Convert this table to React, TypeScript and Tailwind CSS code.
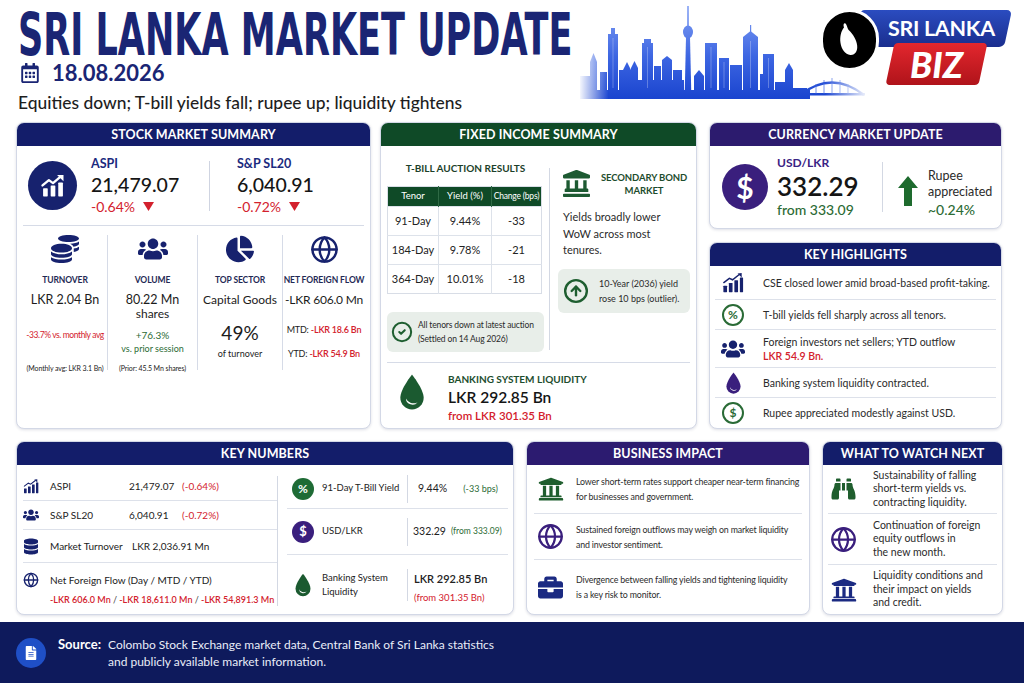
import type { ReactNode } from 'react';
import { Globe, CircleCheck, CircleArrowUp } from 'lucide-react';
import {
  FaBinoculars,
  FaBriefcase,
  FaRegCalendarAlt,
  FaChartPie,
  FaCoins,
  FaDatabase,
  FaFileAlt,
  FaLandmark,
  FaUniversity,
  FaUsers,
} from 'react-icons/fa';

// Small hand-drawn glyphs that the icon packs don't carry in this shape.
function ChartUp({ className = '' }: { className?: string }) {
  return (
    <svg viewBox="0 0 24 24" className={className} fill="currentColor" aria-hidden>
      <rect x="3.5" y="14" width="4" height="7" rx="0.6" />
      <rect x="10" y="11.5" width="4" height="9.5" rx="0.6" />
      <rect x="16.5" y="9" width="4" height="12" rx="0.6" />
      <path d="M3 11.5 8.5 7l3.5 2.5 6.5-5.5" fill="none" stroke="currentColor" strokeWidth="2" strokeLinecap="round" strokeLinejoin="round" />
      <path d="M21 2.5V8l-5.5-5.5z" />
    </svg>
  );
}

function BarsUp({ className = '' }: { className?: string }) {
  return (
    <svg viewBox="0 0 24 24" className={className} fill="currentColor" aria-hidden>
      <rect x="1.5" y="15" width="4" height="7" rx="0.5" />
      <rect x="7.5" y="12" width="4" height="10" rx="0.5" />
      <rect x="13.5" y="9" width="4" height="13" rx="0.5" />
      <rect x="19.5" y="6" width="3.5" height="16" rx="0.5" />
      <path d="M2 11.5 8 7l3.5 1.5L18.5 3" fill="none" stroke="currentColor" strokeWidth="1.6" strokeLinecap="round" />
      <path d="M21.5 1v5l-4.5-4.5z" />
    </svg>
  );
}

function Drop({ className = '' }: { className?: string }) {
  return (
    <svg viewBox="0 0 24 32" className={className} aria-hidden>
      <path d="M12 1C12 1 2 13.5 2 21a10 10 0 0 0 20 0C22 13.5 12 1 12 1Z" fill="currentColor" />
      <path d="M6.8 21.5a5.6 5.6 0 0 0 10 3.2 7 7 0 0 1-10-3.2Z" fill="#fff" />
    </svg>
  );
}

function UpArrow({ className = '' }: { className?: string }) {
  return (
    <svg viewBox="0 0 20 30" className={className} fill="currentColor" aria-hidden>
      <path d="M10 0 20 12h-6v18H6V12H0z" />
    </svg>
  );
}

function Tri() {
  return (
    <svg viewBox="0 0 10 8" className="h-[9px] w-[11px]" fill="#d3212d" aria-hidden>
      <path d="M0 0h10L5 8z" />
    </svg>
  );
}

function Skyline() {
  return (
    <svg width="285" height="95" viewBox="0 0 285 95" className="mt-[4px] shrink-0" aria-hidden>
      <defs>
        <linearGradient id="skyFill" gradientUnits="userSpaceOnUse" x1="0" y1="0" x2="0" y2="95">
          <stop offset="0" stopColor="#86a3f5" />
          <stop offset="0.55" stopColor="#3d66e2" />
          <stop offset="1" stopColor="#1a44cf" />
        </linearGradient>
        <linearGradient id="skyFade" x1="0" y1="0" x2="1" y2="0">
          <stop offset="0" stopColor="#fff" stopOpacity="0.95" />
          <stop offset="0.1" stopColor="#fff" stopOpacity="0" />
          <stop offset="0.86" stopColor="#fff" stopOpacity="0" />
          <stop offset="1" stopColor="#fff" stopOpacity="0.9" />
        </linearGradient>
      </defs>
      <g fill="url(#skyFill)">
        <rect x="0" y="72" width="10" height="22" />
        <path d="M10 94V58l3.5-9 3.5 9v36z" />
        <rect x="20" y="68" width="7" height="26" />
        <rect x="28" y="30" width="10" height="64" />
        <rect x="31" y="24" width="4" height="7" />
        <rect x="39" y="66" width="5" height="28" />
        <path d="M43 94V66l4-8 4 8v28z" />
        <path d="M51 94V64l3.5-7 3.5 7v30z" />
        <rect x="58" y="76" width="46" height="18" />
        <rect x="62" y="39" width="11" height="55" />
        <rect x="64" y="35" width="7" height="5" />
        <rect x="74" y="62" width="7" height="32" />
        <rect x="82" y="56" width="10" height="38" />
        <path d="M82 56l5-4 5 4z" />
        <rect x="93" y="66" width="9" height="28" />
        <rect x="107.2" y="2" width="1.6" height="20" />
        <ellipse cx="108" cy="28" rx="5" ry="6.5" />
        <path d="M106 33h4l1.4 61h-6.8z" />
        <path d="M114 94V72l5-6 5 6v22z" />
        <rect x="125" y="39" width="12" height="55" />
        <rect x="139" y="54" width="10" height="40" />
        <rect x="150" y="61" width="12" height="33" />
        <rect x="163" y="33" width="15" height="61" />
        <path d="M163 33l7.5-6 7.5 6z" />
        <rect x="170" y="21" width="1.2" height="7" />
        <rect x="180" y="70" width="3" height="24" />
        <rect x="183" y="50" width="11" height="44" />
        <rect x="195" y="78" width="10" height="16" />
        <rect x="205" y="66" width="8" height="28" />
        <path d="M205 66l4-7 4 7z" />
        <rect x="213" y="84" width="14" height="10" />
        <rect x="0" y="86" width="230" height="9" />
        <rect x="215" y="89" width="70" height="2.5" />
      </g>
      <path d="M220 91 Q252 66 284 91" fill="none" stroke="url(#skyFill)" strokeWidth="2.4" />
      <g stroke="#3d66e2" strokeWidth="0.7">
        <line x1="236" y1="80" x2="236" y2="90" />
        <line x1="244" y1="76" x2="244" y2="90" />
        <line x1="252" y1="74" x2="252" y2="90" />
        <line x1="260" y1="76" x2="260" y2="90" />
        <line x1="268" y1="80" x2="268" y2="90" />
      </g>
      <g stroke="#fff" strokeOpacity="0.35" strokeWidth="0.8">
        <line x1="33" y1="34" x2="33" y2="84" />
        <line x1="67.5" y1="43" x2="67.5" y2="84" />
        <line x1="131" y1="43" x2="131" y2="84" />
        <line x1="170.5" y1="37" x2="170.5" y2="84" />
        <line x1="188.5" y1="54" x2="188.5" y2="84" />
        <line x1="144" y1="58" x2="144" y2="84" />
      </g>
      <rect width="285" height="95" fill="url(#skyFade)" />
    </svg>
  );
}

function Logo() {
  return (
    <div className="relative ml-[-45px] mt-[8px] h-[80px] w-[192px] shrink-0">
      <div className="absolute left-[36px] top-[2px] flex h-[37px] w-[152px] -skew-x-12 items-center justify-end rounded-[5px] bg-linear-to-b from-[#2b4cc0] to-[#1a2e8e] pr-[13px]">
        <span className="skew-x-12 text-[21.5px] font-bold leading-none tracking-[-0.3px] text-white">SRI LANKA</span>
      </div>
      <div className="absolute left-[70px] top-[35px] flex h-[42px] w-[93px] -skew-x-12 items-center justify-center rounded-[4px] bg-linear-to-b from-[#e3272e] to-[#b0131a]">
        <span className="skew-x-12 text-[36px] font-black italic leading-none text-white">BIZ</span>
      </div>
      <div className="absolute left-0 top-[1px] h-[62px] w-[59px] overflow-hidden rounded-full border-[3px] border-white bg-black">
        <svg viewBox="0 0 54 56" className="h-full w-full" aria-hidden>
          <path
            d="M22 11c-1.2.4-1.4 2.4-.6 4.2-2.8 3.4-4.4 9-3.6 15.6.8 6.6 4.8 12 10 12.4 5 .4 7.6-4 7-9.6-.6-6-4.2-11.6-8.4-15.6-1.8-1.8-2.4-7.6-4.4-7Z"
            fill="#fff"
          />
        </svg>
      </div>
    </div>
  );
}

function Panel({ title, bar, className = '', children }: { title: string; bar: string; className?: string; children: ReactNode }) {
  return (
    <section className={`flex flex-col overflow-hidden rounded-[8px] border border-[#d3d8e6] bg-white shadow-[0_1px_3px_rgba(20,30,80,0.14)] ${className}`}>
      <h2 className={`h-[23px] shrink-0 text-center text-[12.5px] font-bold leading-[23px] tracking-[0.1px] text-white ${bar}`}>{title}</h2>
      {children}
    </section>
  );
}

function IndexFigure({ name, value, change, className = '' }: { name: string; value: string; change: string; className?: string }) {
  return (
    <div className={className}>
      <p className="text-[12.5px] font-bold leading-[16px] text-[#1b2a7e]">{name}</p>
      <p className="text-[19.5px] font-medium leading-[26px] text-[#151515]">{value}</p>
      <p className="flex items-center gap-[8px] text-[14px] leading-[18px] text-[#d3212d]">
        {change}
        <Tri />
      </p>
    </div>
  );
}

function StatCol({ icon, label, first = false, children }: { icon: ReactNode; label: string; first?: boolean; children: ReactNode }) {
  return (
    <div className={`mt-[9px] flex h-[135px] flex-col items-center whitespace-nowrap ${first ? '' : 'border-l border-[#d6dbe7]'}`}>
      <div className="flex h-[28px] items-center text-[#17226e]">{icon}</div>
      <p className="mt-[11px] text-[8.5px] font-bold leading-[12px] tracking-[-0.1px] text-[#1f2a55]">{label}</p>
      {children}
    </div>
  );
}

function StockSummary() {
  return (
    <Panel title="STOCK MARKET SUMMARY" bar="bg-[#131d6a]" className="h-[307px] w-[355px]">
      <div className="flex h-[79px] shrink-0 items-center pl-[11px]">
        <div className="grid h-[49px] w-[49px] place-items-center rounded-full bg-[#17226e]">
          <ChartUp className="h-[28px] w-[28px] text-white" />
        </div>
        <IndexFigure className="ml-[14px] w-[118px]" name="ASPI" value="21,479.07" change="-0.64%" />
        <div className="h-[50px] w-px bg-[#cfd4e1]" />
        <IndexFigure className="ml-[27px]" name="S&P SL20" value="6,040.91" change="-0.72%" />
      </div>
      <div className="mx-[6px] h-px shrink-0 bg-[#d6dbe7]" />
      <div className="grid grid-cols-[84px_90px_85px_83px] px-[6px] text-center text-[#1c1c1c]">
        <StatCol first icon={<FaCoins className="h-[28px] w-[28px]" />} label="TURNOVER">
          <p className="mt-[6px] text-[12.5px] leading-[16px]">LKR 2.04 Bn</p>
          <p className="mt-[21px] text-[8.5px] leading-[12px] tracking-[-0.4px] text-[#d3212d]">-33.7% vs. monthly avg</p>
          <p className="mt-[22px] text-[7px] leading-[10px] tracking-[-0.1px]">(Monthly avg: LKR 3.1 Bn)</p>
        </StatCol>
        <StatCol icon={<FaUsers className="h-[28px] w-[30px]" />} label="VOLUME">
          <p className="mt-[6px] text-[12.5px] leading-[16px]">80.22 Mn</p>
          <p className="text-[12px] leading-[12px]">shares</p>
          <p className="mt-[9px] text-[10px] leading-[12px] text-[#2c6b35]">+76.3%</p>
          <p className="mt-[1px] text-[9px] leading-[14px] text-[#2c6b35]">vs. prior session</p>
          <p className="mt-[7px] text-[7px] leading-[10px] tracking-[-0.1px]">(Prior: 45.5 Mn shares)</p>
        </StatCol>
        <StatCol icon={<FaChartPie className="h-[28px] w-[28px]" />} label="TOP SECTOR">
          <p className="mt-[6px] text-[12px] leading-[16px]">Capital Goods</p>
          <p className="mt-[13px] text-[19px] leading-[24px]">49%</p>
          <p className="mt-[3px] text-[9px] leading-[12px]">of turnover</p>
        </StatCol>
        <StatCol icon={<Globe className="h-[29px] w-[29px]" strokeWidth={2} />} label="NET FOREIGN FLOW">
          <p className="mt-[6px] text-[12px] leading-[16px] tracking-[-0.2px]">-LKR 606.0 Mn</p>
          <p className="mt-[15px] text-[9px] leading-[14px] tracking-[-0.2px]">
            MTD: <span className="font-semibold text-[#d3212d]">-LKR 18.6 Bn</span>
          </p>
          <p className="mt-[10px] text-[9px] leading-[14px] tracking-[-0.2px]">
            YTD: <span className="font-semibold text-[#d3212d]">-LKR 54.9 Bn</span>
          </p>
        </StatCol>
      </div>
    </Panel>
  );
}

const tbills = [
  ['91-Day', '9.44%', '-33'],
  ['184-Day', '9.78%', '-21'],
  ['364-Day', '10.01%', '-18'],
];

function FixedIncome() {
  return (
    <Panel title="FIXED INCOME SUMMARY" bar="bg-[#0f4a27]" className="ml-[9px] h-[307px] w-[317px]">
      <div className="flex h-[216px] shrink-0 pl-[6px]">
        <div className="w-[157px] pt-[14px]">
          <p className="text-center text-[10px] font-bold leading-[16px] text-[#1c3f2a]">T-BILL AUCTION RESULTS</p>
          <table className="mt-[10px] w-[155px] border-collapse border border-[#d8dde6] text-center">
            <thead>
              <tr className="h-[20px] bg-[#0f4a27] text-white">
                <th className="w-[51px] border-r border-[#2f6a45] text-[9.5px] font-normal">Tenor</th>
                <th className="w-[53px] border-r border-[#2f6a45] text-[9.5px] font-normal">Yield (%)</th>
                <th className="text-[8.5px] font-normal tracking-[-0.2px]">Change (bps)</th>
              </tr>
            </thead>
            <tbody className="text-[11px] text-[#222]">
              {tbills.map(([tenor, yieldPct, change]) => (
                <tr key={tenor} className="h-[29px] border-t border-[#dde2ea]">
                  <td className="border-r border-[#dde2ea]">{tenor}</td>
                  <td className="border-r border-[#dde2ea]">{yieldPct}</td>
                  <td>{change}</td>
                </tr>
              ))}
            </tbody>
          </table>
          <div className="mt-[18px] flex h-[40px] items-center rounded-[6px] bg-[#e8eee9] pl-[4px]">
            <CircleCheck className="h-[22px] w-[22px] shrink-0 text-[#1e5e30]" strokeWidth={2.2} />
            <p className="ml-[5px] whitespace-nowrap text-[8.5px] leading-[14px] tracking-[-0.15px] text-[#2a2a2a]">
              All tenors down at latest auction
              <br />
              (Settled on 14 Aug 2026)
            </p>
          </div>
        </div>
        <div className="ml-[5px] mt-[22px] h-[182px] w-px bg-[#d3d8e3]" />
        <div className="w-[140px] pl-[8px]">
          <div className="mt-[24px] flex items-center pl-[5px]">
            <FaLandmark className="h-[27px] w-[27px] shrink-0 text-[#1d5a32]" />
            <p className="ml-[8px] w-[92px] whitespace-nowrap text-center text-[9.5px] font-bold leading-[13px] tracking-[-0.1px] text-[#1d4d2e]">
              SECONDARY BOND
              <br />
              MARKET
            </p>
          </div>
          <p className="mt-[12px] pl-[5px] text-[11px] leading-[16.5px] text-[#2b2b2b]">
            Yields broadly lower
            <br />
            WoW across most
            <br />
            tenures.
          </p>
          <div className="mt-[10px] flex h-[44px] w-[132px] items-center rounded-[6px] bg-[#e8eee9] pl-[5px]">
            <CircleArrowUp className="h-[26px] w-[26px] shrink-0 text-[#1e5e30]" strokeWidth={2.2} />
            <p className="ml-[10px] whitespace-nowrap text-[9px] leading-[15px] text-[#2a2a2a]">
              10-Year (2036) yield
              <br />
              rose 10 bps (outlier).
            </p>
          </div>
        </div>
      </div>
      <div className="mx-[6px] h-px shrink-0 bg-[#d6dbe7]" />
      <div className="flex pl-[17px] pt-[9px]">
        <Drop className="mt-[1px] h-[38px] w-[28px] text-[#1b5a30]" />
        <div className="ml-[22px]">
          <p className="text-[10px] font-bold leading-[14px] text-[#1d4d2e]">BANKING SYSTEM LIQUIDITY</p>
          <p className="text-[15.5px] font-semibold leading-[22px] text-[#151515]">LKR 292.85 Bn</p>
          <p className="text-[11.5px] font-semibold leading-[16px] text-[#d3212d]">from LKR 301.35 Bn</p>
        </div>
      </div>
    </Panel>
  );
}

function RingGlyph({ glyph }: { glyph: string }) {
  return (
    <div className="grid h-[22px] w-[22px] place-items-center rounded-full border-[2px] border-[#2a6b36] text-[12px] font-bold leading-none text-[#2a6b36]">
      {glyph}
    </div>
  );
}

const highlights: { h: string; icon: ReactNode; text: ReactNode }[] = [
  { h: 'h-[33px]', icon: <BarsUp className="h-[22px] w-[22px] text-[#17226e]" />, text: 'CSE closed lower amid broad-based profit-taking.' },
  { h: 'h-[29px]', icon: <RingGlyph glyph="%" />, text: 'T-bill yields fell sharply across all tenors.' },
  {
    h: 'h-[37px]',
    icon: <FaUsers className="h-[22px] w-[24px] text-[#17226e]" />,
    text: (
      <>
        Foreign investors net sellers; YTD outflow
        <br />
        <span className="font-semibold text-[#d3212d]">LKR 54.9 Bn.</span>
      </>
    ),
  },
  { h: 'h-[29px]', icon: <Drop className="h-[24px] w-[17px] text-[#3a1f7d]" />, text: 'Banking system liquidity contracted.' },
  { h: 'h-[30px]', icon: <RingGlyph glyph="$" />, text: 'Rupee appreciated modestly against USD.' },
];

function CurrencyColumn() {
  return (
    <div className="ml-[12px] flex w-[293px] flex-col">
      <Panel title="CURRENCY MARKET UPDATE" bar="bg-[#2c1b6e]" className="h-[107px]">
        <div className="flex flex-1 items-center pl-[12px]">
          <div className="grid h-[46px] w-[46px] shrink-0 place-items-center rounded-full bg-[#3a1f7d] text-[30px] font-bold leading-none text-white">
            $
          </div>
          <div className="ml-[9px] w-[105px]">
            <p className="text-[12px] font-bold leading-[16px] text-[#3a2384]">USD/LKR</p>
            <p className="text-[26px] font-semibold leading-[30px] text-[#151515]">332.29</p>
            <p className="text-[14px] font-medium leading-[18px] text-[#2c6b35]">from 333.09</p>
          </div>
          <div className="h-[50px] w-px bg-[#d3d8e3]" />
          <UpArrow className="ml-[15px] mt-[8px] h-[30px] w-[20px] text-[#1e6b2e]" />
          <div className="ml-[10px] mt-[14px] text-[12.5px] leading-[16px] text-[#2b2b2b]">
            <p>Rupee</p>
            <p>appreciated</p>
            <p className="text-[14px] font-medium leading-[20px] text-[#2c6b35]">~0.24%</p>
          </div>
        </div>
      </Panel>
      <Panel title="KEY HIGHLIGHTS" bar="bg-[#131d6a]" className="mt-[13px] h-[187px]">
        {highlights.map((row, i) => (
          <div key={i}>
            {i > 0 && <div className="mx-[5px] h-px bg-[#dde1ea]" />}
            <div className={`flex items-center pl-[11px] ${row.h}`}>
              <div className="flex w-[24px] shrink-0 justify-center">{row.icon}</div>
              <p className="ml-[18px] text-[10.5px] leading-[14px] text-[#2b2b2b]">{row.text}</p>
            </div>
          </div>
        ))}
      </Panel>
    </div>
  );
}

function KeyNumbers() {
  const rule = <div className="h-px bg-[#dde1ea]" />;
  return (
    <Panel title="KEY NUMBERS" bar="bg-[#131d6a]" className="w-[498px]">
      <div className="flex flex-1 whitespace-nowrap text-[10px] text-[#222]">
        <div className="w-[260px] pl-[6px]">
          <div className="w-[254px]">
            <div className="flex h-[35px] items-center pt-[8px]">
              <div className="flex w-[16px] justify-center">
                <BarsUp className="h-[17px] w-[17px] text-[#17226e]" />
              </div>
              <span className="ml-[11px] w-[79px]">ASPI</span>
              <span className="w-[53px]">21,479.07</span>
              <span className="text-[#d3212d]">(-0.64%)</span>
            </div>
            {rule}
            <div className="flex h-[28px] items-center">
              <div className="flex w-[16px] justify-center">
                <FaUsers className="h-[16px] w-[18px] text-[#17226e]" />
              </div>
              <span className="ml-[11px] w-[79px]">S&amp;P SL20</span>
              <span className="w-[53px]">6,040.91</span>
              <span className="text-[#d3212d]">(-0.72%)</span>
            </div>
            {rule}
            <div className="flex h-[32px] items-center">
              <div className="flex w-[16px] justify-center">
                <FaDatabase className="h-[17px] w-[14px] text-[#17226e]" />
              </div>
              <span className="ml-[11px] w-[82px]">Market Turnover</span>
              <span>LKR 2,036.91 Mn</span>
            </div>
            {rule}
            <div className="pt-[8px]">
              <div className="flex items-center">
                <div className="flex w-[16px] justify-center">
                  <Globe className="h-[18px] w-[18px] text-[#17226e]" strokeWidth={2} />
                </div>
                <span className="ml-[11px] leading-[16px]">Net Foreign Flow (Day / MTD / YTD)</span>
              </div>
              <p className="ml-[27px] mt-[2px] text-[9px] font-semibold leading-[18px] text-[#d3212d]">
                -LKR 606.0 Mn <span className="font-normal text-[#444]">/</span> -LKR 18,611.0 Mn{' '}
                <span className="font-normal text-[#444]">/</span> -LKR 54,891.3 Mn
              </p>
            </div>
          </div>
        </div>
        <div className="mt-[11px] h-[130px] w-px bg-[#d3d8e3]" />
        <div className="flex-1 pl-[9px] pr-[5px]">
          <div className="flex h-[43px] items-center pt-[4px]">
            <div className="ml-[5px] grid h-[22px] w-[22px] shrink-0 place-items-center rounded-full bg-[#1e6b35] text-[12px] font-bold text-white">%</div>
            <span className="ml-[8px] w-[85px] text-[9.5px]">91-Day T-Bill Yield</span>
            <div className="h-[28px] w-px bg-[#d3d8e3]" />
            <span className="ml-[10px] text-[10.5px]">9.44%</span>
            <span className="ml-[16px] text-[9px] text-[#2c6b35]">(-33 bps)</span>
          </div>
          {rule}
          <div className="flex h-[45px] items-center">
            <div className="ml-[5px] grid h-[22px] w-[22px] shrink-0 place-items-center rounded-full bg-[#3a1f7d] text-[13px] font-bold text-white">$</div>
            <span className="ml-[8px] w-[85px] text-[9.5px]">USD/LKR</span>
            <div className="h-[28px] w-px bg-[#d3d8e3]" />
            <span className="ml-[5px] text-[10.5px]">332.29</span>
            <span className="ml-[5px] text-[8.5px] text-[#2c6b35]">(from 333.09)</span>
          </div>
          {rule}
          <div className="flex h-[60px] items-center">
            <Drop className="ml-[7px] h-[24px] w-[18px] shrink-0 text-[#1b5a30]" />
            <span className="ml-[10px] w-[85px] text-[9.5px] leading-[14px]">
              Banking System
              <br />
              Liquidity
            </span>
            <div className="h-[32px] w-px bg-[#d3d8e3]" />
            <div className="ml-[6px] mt-[6px]">
              <p className="text-[11px] font-semibold leading-[18px]">LKR 292.85 Bn</p>
              <p className="mt-[2px] text-[9.5px] leading-[16px] text-[#d3212d]">(from 301.35 Bn)</p>
            </div>
          </div>
        </div>
      </div>
    </Panel>
  );
}

const impacts: { h: string; icon: ReactNode; text: ReactNode }[] = [
  {
    h: 'h-[48px]',
    icon: <FaUniversity className="h-[26px] w-[26px] text-[#1f5e2e]" />,
    text: (
      <>
        Lower short-term rates support cheaper near-term financing
        <br />
        for businesses and government.
      </>
    ),
  },
  {
    h: 'h-[45px]',
    icon: <Globe className="h-[27px] w-[27px] text-[#3a1f7d]" strokeWidth={2} />,
    text: (
      <>
        Sustained foreign outflows may weigh on market liquidity
        <br />
        and investor sentiment.
      </>
    ),
  },
  {
    h: 'h-[54px]',
    icon: <FaBriefcase className="h-[25px] w-[25px] text-[#1b2a82]" />,
    text: (
      <>
        Divergence between falling yields and tightening liquidity
        <br />
        is a key risk to monitor.
      </>
    ),
  },
];

const watch: { h: string; icon: ReactNode; lines: string[] }[] = [
  { h: 'h-[48px]', icon: <FaBinoculars className="h-[24px] w-[27px] text-[#1f5e2e]" />, lines: ['Sustainability of falling', 'short-term yields vs.', 'contracting liquidity.'] },
  { h: 'h-[50px]', icon: <Globe className="h-[27px] w-[27px] text-[#3a1f7d]" strokeWidth={2} />, lines: ['Continuation of foreign', 'equity outflows in', 'the new month.'] },
  { h: 'h-[49px]', icon: <FaUniversity className="h-[26px] w-[26px] text-[#1b2a82]" />, lines: ['Liquidity conditions and', 'their impact on yields', 'and credit.'] },
];

function BusinessImpact() {
  return (
    <Panel title="BUSINESS IMPACT" bar="bg-[#2c1b70]" className="ml-[12px] w-[284px]">
      {impacts.map((row, i) => (
        <div key={i}>
          {i > 0 && <div className="mx-[7px] h-px bg-[#dde1ea]" />}
          <div className={`flex items-center pl-[10px] ${row.h}`}>
            <div className="flex w-[27px] shrink-0 justify-center">{row.icon}</div>
            <p className="ml-[12px] whitespace-nowrap text-[8.8px] leading-[15px] tracking-[-0.15px] text-[#2b2b2b]">{row.text}</p>
          </div>
        </div>
      ))}
    </Panel>
  );
}

function WatchNext() {
  return (
    <Panel title="WHAT TO WATCH NEXT" bar="bg-[#131d6a]" className="ml-[12px] w-[181px]">
      {watch.map((row, i) => (
        <div key={i}>
          {i > 0 && <div className="mx-[5px] h-px bg-[#dde1ea]" />}
          <div className={`flex items-center pl-[7px] ${row.h}`}>
            <div className="flex w-[27px] shrink-0 justify-center">{row.icon}</div>
            <p className="ml-[16px] text-[10.5px] leading-[13.5px] text-[#2b2b2b]">
              {row.lines.map((line, j) => (
                <span key={j} className="block">
                  {line}
                </span>
              ))}
            </p>
          </div>
        </div>
      ))}
    </Panel>
  );
}

export default function App() {
  return (
    <div className="h-[683px] w-[1024px] overflow-hidden bg-white font-['Lato',sans-serif] text-[#222]">
      <header className="flex h-[122px]">
        <div className="w-[580px] shrink-0 pl-[18px] pt-[13px]">
          <h1 className="h-[45px] origin-left scale-x-[0.672] whitespace-nowrap font-['DejaVu_Sans_Condensed',sans-serif] text-[58px] font-bold leading-[45px] text-[#1a2574]">
            SRI LANKA MARKET UPDATE
          </h1>
          <div className="mt-[3px] flex h-[24px] items-center">
            <FaRegCalendarAlt className="ml-[2px] h-[20px] w-[20px] text-[#1a2574]" />
            <span className="ml-[12px] text-[22px] font-bold leading-[24px] text-[#1a2574]">18.08.2026</span>
          </div>
          <p className="mt-[8px] whitespace-nowrap text-[17.4px] font-medium leading-[20px] text-[#1e1e1e]">
            Equities down; T-bill yields fall; rupee up; liquidity tightens
          </p>
        </div>
        <Skyline />
        <Logo />
      </header>

      <div className="flex h-[307px] px-[16px]">
        <StockSummary />
        <FixedIncome />
        <CurrencyColumn />
      </div>

      <div className="mt-[12px] flex h-[174px] px-[16px]">
        <KeyNumbers />
        <BusinessImpact />
        <WatchNext />
      </div>

      <footer className="mt-[7px] flex h-[61px] items-center bg-[#0e1a5c] pl-[16px]">
        <div className="grid h-[30px] w-[30px] shrink-0 place-items-center rounded-full bg-[#1f4fc6]">
          <FaFileAlt className="h-[14px] w-[12px] text-white" />
        </div>
        <div className="ml-[12px] flex items-start leading-[17px]">
          <span className="w-[50px] shrink-0 text-[13px] font-bold text-white">Source:</span>
          <p className="text-[12px] text-[#e9edf8]">
            Colombo Stock Exchange market data, Central Bank of Sri Lanka statistics
            <br />
            and publicly available market information.
          </p>
        </div>
      </footer>
    </div>
  );
}
